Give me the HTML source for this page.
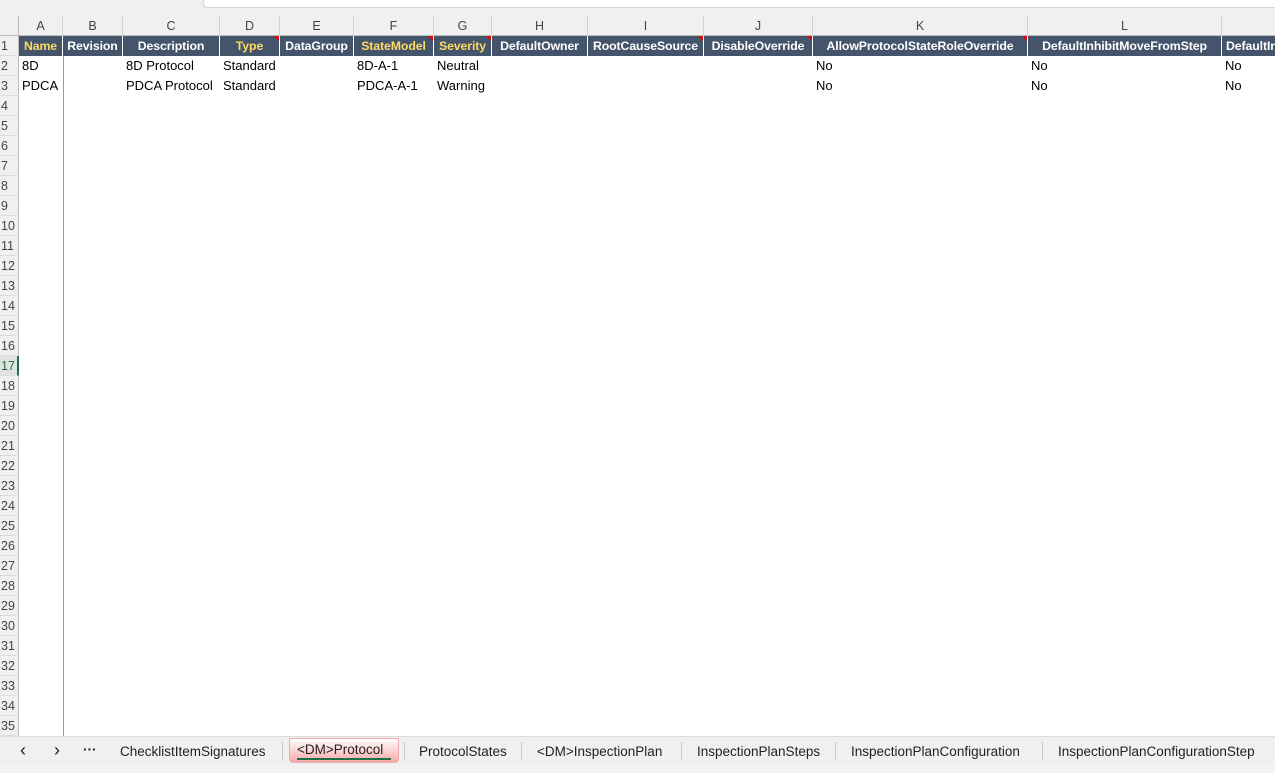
<!DOCTYPE html>
<html><head><meta charset="utf-8"><style>
*{margin:0;padding:0;box-sizing:border-box}
body{width:1275px;height:773px;overflow:hidden;background:#fff;font-family:"Liberation Sans",Calibri,sans-serif;font-size:13px;color:#000;position:relative}
.a{position:absolute}
.top{left:0;top:0;width:1275px;height:16px;background:#f0f0f0}
.topbox{left:203px;top:-2px;width:1080px;height:10px;background:#fff;border:1px solid #d6d6d6;border-radius:4px}
.colh{top:16px;height:20px;background:#f0f0f0;border-right:1px solid #d4d4d4;border-bottom:1px solid #bdbdbd;text-align:center;line-height:20px;color:#444;font-size:12.5px}
.corner{left:0;top:16px;width:19px;height:20px;background:#f0f0f0;border-right:1px solid #bdbdbd;border-bottom:1px solid #bdbdbd}
.rh{left:0;width:19px;height:20px;background:#f0f0f0;border-right:1px solid #bdbdbd;border-bottom:1px solid #dcdcdc;font-size:12.5px;line-height:20px;color:#444;padding-left:1px;overflow:hidden;white-space:nowrap}
.hd{top:36px;height:20px;background:#44546a;color:#fff;font-weight:bold;text-align:center;line-height:20px;border-right:1px solid #fff;white-space:nowrap;overflow:hidden;font-size:12.3px;letter-spacing:-0.1px}
.y{color:#ffd966}
.hd.c::after{content:"";position:absolute;right:0;top:0;border-top:5px solid #e00;border-left:5px solid transparent}
.c2{height:20px;line-height:20px;padding-left:3px;white-space:nowrap}
.tabs{left:0;top:736px;width:1275px;height:30px;background:#f0f0f0;border-top:1px solid #ddd}
.tab{top:742px;height:24px;line-height:18px;font-size:13.5px;color:#222;white-space:nowrap}
.sep{top:742px;width:1px;height:18px;background:#ccc}
.bot{left:0;top:766px;width:1275px;height:7px;background:#f3f3f3}
</style></head><body>
<div class="a top"></div><div class="a topbox"></div>
<div class="a corner"></div>
<div class="a colh" style="left:19px;width:44px">A</div>
<div class="a colh" style="left:63px;width:60px">B</div>
<div class="a colh" style="left:123px;width:97px">C</div>
<div class="a colh" style="left:220px;width:60px">D</div>
<div class="a colh" style="left:280px;width:74px">E</div>
<div class="a colh" style="left:354px;width:80px">F</div>
<div class="a colh" style="left:434px;width:58px">G</div>
<div class="a colh" style="left:492px;width:96px">H</div>
<div class="a colh" style="left:588px;width:116px">I</div>
<div class="a colh" style="left:704px;width:109px">J</div>
<div class="a colh" style="left:813px;width:215px">K</div>
<div class="a colh" style="left:1028px;width:194px">L</div>
<div class="a colh" style="left:1222px;width:60px"></div>

<div class="a hd y" style="left:19px;width:44px">Name</div>
<div class="a hd" style="left:63px;width:60px">Revision</div>
<div class="a hd" style="left:123px;width:97px">Description</div>
<div class="a hd y c" style="left:220px;width:60px">Type</div>
<div class="a hd" style="left:280px;width:74px">DataGroup</div>
<div class="a hd y c" style="left:354px;width:80px">StateModel</div>
<div class="a hd y c" style="left:434px;width:58px">Severity</div>
<div class="a hd" style="left:492px;width:96px">DefaultOwner</div>
<div class="a hd c" style="left:588px;width:116px">RootCauseSource</div>
<div class="a hd c" style="left:704px;width:109px">DisableOverride</div>
<div class="a hd c" style="left:813px;width:215px">AllowProtocolStateRoleOverride</div>
<div class="a hd" style="left:1028px;width:194px">DefaultInhibitMoveFromStep</div>
<div class="a hd" style="left:1222px;width:60px;text-align:left;padding-left:4px">DefaultInhibit</div>

<div class="a" style="left:63px;top:56px;width:1px;height:680px;background:#9e9e9e"></div>

<div class="a c2" style="left:19px;top:56px">8D</div>
<div class="a c2" style="left:123px;top:56px">8D Protocol</div>
<div class="a c2" style="left:220px;top:56px">Standard</div>
<div class="a c2" style="left:354px;top:56px">8D-A-1</div>
<div class="a c2" style="left:434px;top:56px">Neutral</div>
<div class="a c2" style="left:813px;top:56px">No</div>
<div class="a c2" style="left:1028px;top:56px">No</div>
<div class="a c2" style="left:1222px;top:56px">No</div>
<div class="a c2" style="left:19px;top:76px">PDCA</div>
<div class="a c2" style="left:123px;top:76px">PDCA Protocol</div>
<div class="a c2" style="left:220px;top:76px">Standard</div>
<div class="a c2" style="left:354px;top:76px">PDCA-A-1</div>
<div class="a c2" style="left:434px;top:76px">Warning</div>
<div class="a c2" style="left:813px;top:76px">No</div>
<div class="a c2" style="left:1028px;top:76px">No</div>
<div class="a c2" style="left:1222px;top:76px">No</div>

<div class="a rh" style="top:36px">1</div>
<div class="a rh" style="top:56px">2</div>
<div class="a rh" style="top:76px">3</div>
<div class="a rh" style="top:96px">4</div>
<div class="a rh" style="top:116px">5</div>
<div class="a rh" style="top:136px">6</div>
<div class="a rh" style="top:156px">7</div>
<div class="a rh" style="top:176px">8</div>
<div class="a rh" style="top:196px">9</div>
<div class="a rh" style="top:216px">10</div>
<div class="a rh" style="top:236px">11</div>
<div class="a rh" style="top:256px">12</div>
<div class="a rh" style="top:276px">13</div>
<div class="a rh" style="top:296px">14</div>
<div class="a rh" style="top:316px">15</div>
<div class="a rh" style="top:336px">16</div>
<div class="a rh" style="top:356px;background:#e2e2e2;color:#1e7145;border-right:2px solid #1e7145">17</div>
<div class="a rh" style="top:376px">18</div>
<div class="a rh" style="top:396px">19</div>
<div class="a rh" style="top:416px">20</div>
<div class="a rh" style="top:436px">21</div>
<div class="a rh" style="top:456px">22</div>
<div class="a rh" style="top:476px">23</div>
<div class="a rh" style="top:496px">24</div>
<div class="a rh" style="top:516px">25</div>
<div class="a rh" style="top:536px">26</div>
<div class="a rh" style="top:556px">27</div>
<div class="a rh" style="top:576px">28</div>
<div class="a rh" style="top:596px">29</div>
<div class="a rh" style="top:616px">30</div>
<div class="a rh" style="top:636px">31</div>
<div class="a rh" style="top:656px">32</div>
<div class="a rh" style="top:676px">33</div>
<div class="a rh" style="top:696px">34</div>
<div class="a rh" style="top:716px">35</div>

<div class="a tabs"></div>
<div class="a tab" style="left:20px;top:741px;font-size:18px">&lsaquo;</div>
<div class="a tab" style="left:54px;top:741px;font-size:18px">&rsaquo;</div>
<div class="a tab" style="left:83px;top:741px;font-weight:bold">···</div>
<div class="a tab" style="left:120px;top:743px">ChecklistItemSignatures</div>
<div class="a sep" style="left:282px"></div>
<div class="a" style="left:289px;top:738px;width:110px;height:25px;background:linear-gradient(#ffffff,#f7a8a8);border-radius:0 0 4px 4px;border:1px solid #eaa"></div>
<div class="a tab" style="left:297px;top:741px;color:#222">&lt;DM&gt;Protocol</div>
<div class="a" style="left:297px;top:758px;width:94px;height:2px;background:#1e7145"></div>
<div class="a sep" style="left:404px"></div>
<div class="a tab" style="left:419px;top:743px">ProtocolStates</div>
<div class="a sep" style="left:521px"></div>
<div class="a tab" style="left:537px;top:743px">&lt;DM&gt;InspectionPlan</div>
<div class="a sep" style="left:681px"></div>
<div class="a tab" style="left:697px;top:743px">InspectionPlanSteps</div>
<div class="a sep" style="left:835px"></div>
<div class="a tab" style="left:851px;top:743px">InspectionPlanConfiguration</div>
<div class="a sep" style="left:1042px"></div>
<div class="a tab" style="left:1058px;top:743px">InspectionPlanConfigurationStep</div>
<div class="a bot"></div>
</body></html>
